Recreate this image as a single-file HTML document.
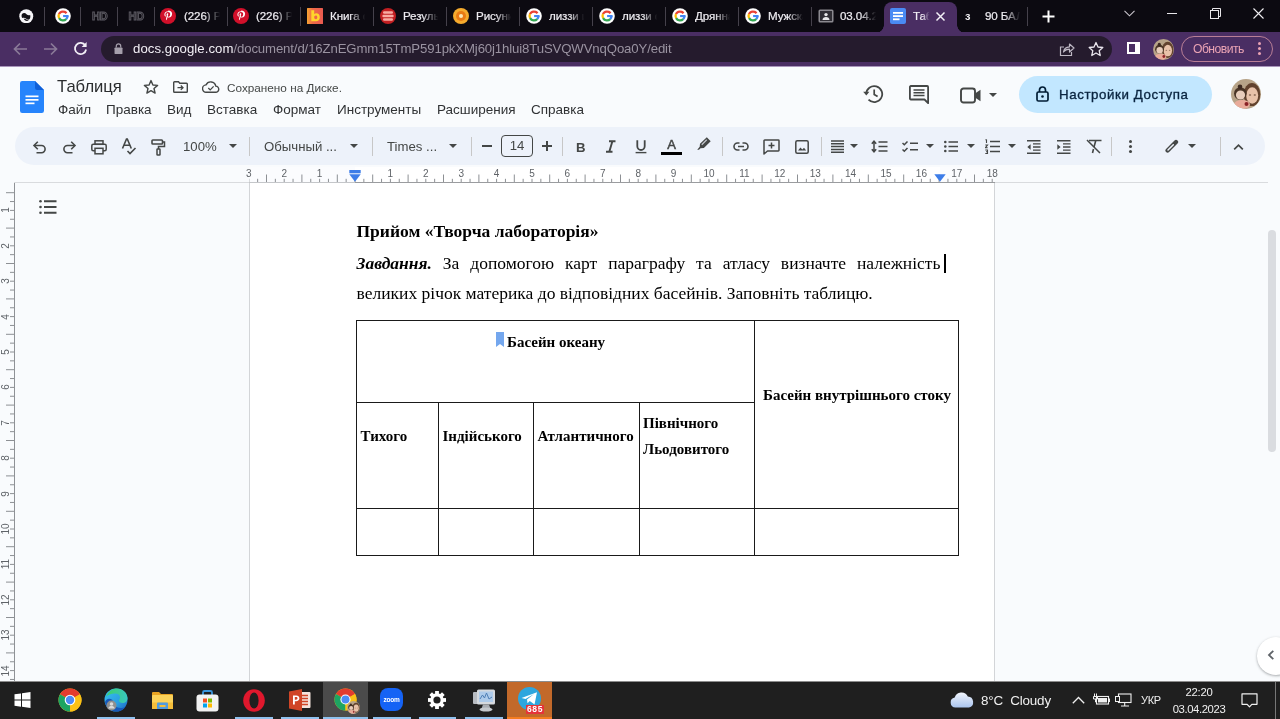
<!DOCTYPE html>
<html lang="ru">
<head>
<meta charset="utf-8">
<title>Таблиця</title>
<style>
*{box-sizing:border-box;margin:0;padding:0}
html,body{width:1280px;height:719px;overflow:hidden;background:#f9fbfd;font-family:"Liberation Sans",sans-serif;}
.abs{position:absolute}
#root{opacity:0.999;position:relative;width:1280px;height:719px;overflow:hidden;background:#f9fbfd}
/* ---------- chrome tab strip ---------- */
#tabs{position:absolute;left:0;top:0;width:1280px;height:33px;background:#0c0a11}
.tsep{position:absolute;top:7px;width:1px;height:19px;background:#45414b}
.tab-t{position:absolute;top:7.8px;font-size:11.6px;color:#efedf2;-webkit-text-stroke:0.2px #efedf2;white-space:nowrap;overflow:hidden;height:16px;line-height:15px;letter-spacing:-0.1px;-webkit-mask-image:linear-gradient(90deg,#000 55%,transparent 98%);mask-image:linear-gradient(90deg,#000 55%,transparent 98%)}
.fav{position:absolute;top:8px;width:16px;height:16px}
#atab{position:absolute;left:884px;top:2px;width:73px;height:31px;background:#4a2e63;border-radius:8px 8px 0 0}
/* ---------- address bar ---------- */
#addr{position:absolute;left:0;top:32px;width:1280px;height:34px;background:#4a2e63}
#pill{position:absolute;left:101px;top:3.5px;width:1011px;height:26.5px;border-radius:13.5px;background:#251b2d}
#url{position:absolute;left:133px;top:8px;font-size:13.2px;line-height:17px;color:#9a93a1;white-space:nowrap;letter-spacing:-0.13px}
#url b{font-weight:normal;color:#f3f0f6;letter-spacing:0.05px}
#upd{position:absolute;left:1181px;top:4px;width:92px;height:26px;border-radius:13px;border:1px solid #b97f96;color:#eaa3b4;font-size:12.2px;line-height:24px;padding-left:11px;letter-spacing:-0.55px}
/* ---------- docs header ---------- */
#hdr{position:absolute;left:0;top:66px;width:1280px;height:62px;background:#f9fbfd;border-top:1px solid #a995bb}
#title{position:absolute;left:57px;top:75.5px;font-size:16.6px;line-height:22px;color:#2b2d2f}
#saved{position:absolute;left:227px;top:81px;font-size:11.75px;line-height:14px;color:#444746}
.menu{position:absolute;top:102px;font-size:13.5px;line-height:16px;color:#303234}
#share{position:absolute;left:1019px;top:76px;width:193px;height:37px;border-radius:19px;background:#c2e7ff}
#share span{position:absolute;left:40px;top:10px;font-size:13.3px;line-height:17px;color:#0a2540;font-weight:normal;letter-spacing:0.58px;-webkit-text-stroke:0.35px #0a2540}
/* ---------- toolbar ---------- */
#tb{position:absolute;left:15px;top:127px;width:1250px;height:38px;border-radius:19px;background:#edf2fa}
.tbs{position:absolute;top:137px;width:1px;height:19px;background:#c7c7c7}
.tbt{position:absolute;top:138px;font-size:13.2px;line-height:17px;color:#444746;white-space:nowrap}
.ic{position:absolute}
.dd{position:absolute;top:144px;width:0;height:0;border-left:4px solid transparent;border-right:4px solid transparent;border-top:4px solid #444746}
.rn{top:168px;width:20px;text-align:center;font-size:10px;line-height:12px;color:#5f6368}
.vn{left:-4px;width:20px;height:20px;text-align:center;font-size:10px;line-height:20px;color:#5f6368;transform:rotate(-90deg)}
.dt{font-family:"Liberation Serif",serif;font-size:17.5px;line-height:30px;color:#000;white-space:nowrap}
.tt{font-family:"Liberation Serif",serif;font-size:15px;line-height:26px;font-weight:bold;color:#000;white-space:nowrap}
</style>
</head>
<body>
<div id="root">
<svg width="0" height="0" style="position:absolute"><defs>
<filter id="avb" x="-10%" y="-10%" width="120%" height="120%"><feGaussianBlur stdDeviation="0.7"/></filter>
<clipPath id="avc"><circle cx="15" cy="15" r="15"/></clipPath>
<symbol id="av" viewBox="0 0 30 30"><g clip-path="url(#avc)"><rect width="30" height="30" fill="#b7a388"/><g filter="url(#avb)">
<ellipse cx="21" cy="15.500" rx="8.300" ry="11.500" fill="#62432d"/>
<ellipse cx="21.200" cy="16.500" rx="6" ry="8.300" fill="#e8c2a9"/>
<circle cx="9.300" cy="14.500" r="6.300" fill="#4a3426"/>
<circle cx="9" cy="7.800" r="2.300" fill="#3e2b20"/>
<circle cx="9.500" cy="16" r="4.600" fill="#e8cdbb"/>
<ellipse cx="11" cy="25.500" rx="8" ry="4.500" fill="#e9ab9a"/>
<circle cx="15.500" cy="25" r="2" fill="#8a2327"/>
<ellipse cx="19" cy="16" rx="1.200" ry="0.700" fill="#7a5a48"/><ellipse cx="23.800" cy="16" rx="1.200" ry="0.700" fill="#7a5a48"/>
</g></g></symbol></defs></svg>

<!-- TAB STRIP -->
<div id="tabs">
  <div id="atab"></div>
  <div class="abs" style="left:876px;top:25px;width:8px;height:8px;background:radial-gradient(circle at 0 0,transparent 7.500px,#4a2e63 8px)"></div><div class="abs" style="left:957px;top:25px;width:8px;height:8px;background:radial-gradient(circle at 100% 0,transparent 7.500px,#4a2e63 8px)"></div>
  <div class="tsep" style="left:44px"></div>
  <div class="tsep" style="left:80px"></div>
  <div class="tsep" style="left:117px"></div>
  <div class="tsep" style="left:154px"></div>
  <div class="tsep" style="left:227px"></div>
  <div class="tsep" style="left:300px"></div>
  <div class="tsep" style="left:373px"></div>
  <div class="tsep" style="left:446px"></div>
  <div class="tsep" style="left:519px"></div>
  <div class="tsep" style="left:592px"></div>
  <div class="tsep" style="left:665px"></div>
  <div class="tsep" style="left:738px"></div>
  <div class="tsep" style="left:811px"></div>
  <div class="tsep" style="left:1027px"></div>
  <svg class="abs" style="left:19px;top:8.500px" width="14.500" height="14.500" viewBox="0 0 16 16"><circle cx="8" cy="8" r="7.700" fill="#f6f5f8"/><path d="M3.300 5.600c1.700-1.700 3.600-1.300 5 .1 1.200 1.200 2.700 1.300 4 .8.500 1.800.2 3.500-.8 4.900-1.500.7-2.900.2-3.900-.8-1.200-1.200-2.700-1.400-4.100-.6C2.700 8.500 2.600 7 3.300 5.600z" fill="#121016"/><path d="M5.200 10.800c1-.4 1.900-.1 2.600.6.900.9 2 1.300 3.100 1.100-1.600 1.300-4.200 1.100-5.700-1.700z" fill="#121016"/></svg>
  <svg class="fav" style="left:55px" viewBox="0 0 16 16"><circle cx="8" cy="8" r="7.800" fill="#fff"/><path d="M2.92 5.63 A5.60 5.60 0 0 1 12.41 4.55 L10.60 5.97 A3.30 3.30 0 0 0 5.01 6.61 Z" fill="#ea4335"/><path d="M3.15 10.80 A5.60 5.60 0 0 1 2.97 5.55 L5.03 6.55 A3.30 3.30 0 0 0 5.14 9.65 Z" fill="#fbbc05"/><path d="M12.16 11.75 A5.60 5.60 0 0 1 3.10 10.71 L5.11 9.60 A3.30 3.30 0 0 0 10.45 10.21 Z" fill="#34a853"/><path d="M13.60 7.80 A5.60 5.60 0 0 1 12.10 11.82 L10.41 10.25 A3.30 3.30 0 0 0 11.30 7.88 Z" fill="#4285f4"/><rect x="8.100" y="7" width="5.400" height="2.100" fill="#4285f4"/></svg>
  <div class="abs" style="left:92px;top:9px;font-size:11px;font-weight:bold;color:#1b1920;line-height:15px;letter-spacing:-0.3px;-webkit-text-stroke:0.9px #5d5b63">HD</div>
  <div class="abs" style="left:128.500px;top:9px;font-size:11px;font-weight:bold;color:#1b1920;line-height:15px;letter-spacing:-0.3px;-webkit-text-stroke:0.9px #5d5b63">HD</div>
  <svg class="fav" style="left:160px" viewBox="0 0 16 16"><circle cx="8" cy="8" r="8" fill="#d1102a"/><path d="M8.2 3.300c-2.500 0-3.800 1.700-3.800 3.300 0 .9.400 1.700 1.100 2 .1.100.2 0 .3-.1l.1-.5c0-.1 0-.2-.1-.3-.2-.3-.4-.7-.4-1.200 0-1.400 1.100-2.400 2.600-2.400 1.400 0 2.200.9 2.200 2 0 1.500-.7 2.700-1.600 2.700-.5 0-.9-.4-.8-1 .2-.6.5-1.300.5-1.800 0-.4-.2-.8-.7-.8-.6 0-1 .6-1 1.400 0 .5.200.8.200.8l-.7 2.800c-.2.800 0 1.900 0 2 0 .1.100.1.100 0 .1-.1.800-1 1-1.800l.4-1.500c.2.400.8.700 1.400.700 1.800 0 3.100-1.700 3.100-3.900 0-1.700-1.400-3.200-3.900-3.200z" fill="#fff"/></svg>
  <div class="tab-t" style="left:184px;width:37px">(226) P</div>
  <svg class="fav" style="left:233px" viewBox="0 0 16 16"><circle cx="8" cy="8" r="8" fill="#d1102a"/><path d="M8.2 3.300c-2.500 0-3.800 1.700-3.800 3.300 0 .9.400 1.700 1.100 2 .1.100.2 0 .3-.1l.1-.5c0-.1 0-.2-.1-.3-.2-.3-.4-.7-.4-1.200 0-1.400 1.100-2.400 2.600-2.400 1.400 0 2.200.9 2.200 2 0 1.500-.7 2.700-1.600 2.700-.5 0-.9-.4-.8-1 .2-.6.5-1.300.5-1.800 0-.4-.2-.8-.7-.8-.6 0-1 .6-1 1.400 0 .5.200.8.200.8l-.7 2.800c-.2.800 0 1.900 0 2 0 .1.100.1.100 0 .1-.1.800-1 1-1.800l.4-1.500c.2.400.8.700 1.400.700 1.800 0 3.100-1.700 3.100-3.900 0-1.700-1.400-3.200-3.900-3.200z" fill="#fff"/></svg>
  <div class="tab-t" style="left:256px;width:37px">(226) P</div>
  <svg class="fav" style="left:307px" viewBox="0 0 16 16"><defs><linearGradient id="bg1" x1="0" y1="0" x2="1" y2="0"><stop offset="0" stop-color="#f7a531"/><stop offset="0.350" stop-color="#ee6a48"/><stop offset="1" stop-color="#ea5a50"/></linearGradient></defs><rect width="16" height="16" rx="0.500" fill="url(#bg1)"/><path d="M4.300 2.300h2.900v3.600c.6-.4 1.300-.6 2.100-.6 2.100 0 3.500 1.500 3.500 3.900s-1.500 4.100-3.800 4.100H4.300zM7.200 9.300c0 1.200.7 1.900 1.600 1.900s1.500-.7 1.500-1.900-.6-1.800-1.500-1.800-1.600.7-1.600 1.800z" fill="#ffd52b"/></svg>
  <div class="tab-t" style="left:330px;width:36px">Книга о</div>
  <svg class="fav" style="left:380px" viewBox="0 0 16 16"><circle cx="8" cy="8" r="8" fill="#c21f22"/><rect x="3" y="3.200" width="10" height="2.600" rx="1.200" fill="#f8aaa2"/><rect x="2.300" y="6.700" width="11.400" height="2.600" rx="1.200" fill="#f8aaa2"/><rect x="3" y="10.200" width="10" height="2.600" rx="1.200" fill="#f8aaa2"/></svg>
  <div class="tab-t" style="left:403px;width:36px">Результ</div>
  <svg class="fav" style="left:453px" viewBox="0 0 16 16"><circle cx="8" cy="8" r="8" fill="#f6ab2d"/><circle cx="8" cy="8" r="5" fill="#ea7a14"/><circle cx="8" cy="8" r="2" fill="#ffe9b3"/></svg>
  <div class="tab-t" style="left:476px;width:36px">Рисунки</div>
  <svg class="fav" style="left:526px" viewBox="0 0 16 16"><circle cx="8" cy="8" r="7.800" fill="#fff"/><path d="M2.92 5.63 A5.60 5.60 0 0 1 12.41 4.55 L10.60 5.97 A3.30 3.30 0 0 0 5.01 6.61 Z" fill="#ea4335"/><path d="M3.15 10.80 A5.60 5.60 0 0 1 2.97 5.55 L5.03 6.55 A3.30 3.30 0 0 0 5.14 9.65 Z" fill="#fbbc05"/><path d="M12.16 11.75 A5.60 5.60 0 0 1 3.10 10.71 L5.11 9.60 A3.30 3.30 0 0 0 10.45 10.21 Z" fill="#34a853"/><path d="M13.60 7.80 A5.60 5.60 0 0 1 12.10 11.82 L10.41 10.25 A3.30 3.30 0 0 0 11.30 7.88 Z" fill="#4285f4"/><rect x="8.100" y="7" width="5.400" height="2.100" fill="#4285f4"/></svg>
  <div class="tab-t" style="left:549px;width:36px">лиззи и</div>
  <svg class="fav" style="left:599px" viewBox="0 0 16 16"><circle cx="8" cy="8" r="7.800" fill="#fff"/><path d="M2.92 5.63 A5.60 5.60 0 0 1 12.41 4.55 L10.60 5.97 A3.30 3.30 0 0 0 5.01 6.61 Z" fill="#ea4335"/><path d="M3.15 10.80 A5.60 5.60 0 0 1 2.97 5.55 L5.03 6.55 A3.30 3.30 0 0 0 5.14 9.65 Z" fill="#fbbc05"/><path d="M12.16 11.75 A5.60 5.60 0 0 1 3.10 10.71 L5.11 9.60 A3.30 3.30 0 0 0 10.45 10.21 Z" fill="#34a853"/><path d="M13.60 7.80 A5.60 5.60 0 0 1 12.10 11.82 L10.41 10.25 A3.30 3.30 0 0 0 11.30 7.88 Z" fill="#4285f4"/><rect x="8.100" y="7" width="5.400" height="2.100" fill="#4285f4"/></svg>
  <div class="tab-t" style="left:622px;width:36px">лиззи о</div>
  <svg class="fav" style="left:672px" viewBox="0 0 16 16"><circle cx="8" cy="8" r="7.800" fill="#fff"/><path d="M2.92 5.63 A5.60 5.60 0 0 1 12.41 4.55 L10.60 5.97 A3.30 3.30 0 0 0 5.01 6.61 Z" fill="#ea4335"/><path d="M3.15 10.80 A5.60 5.60 0 0 1 2.97 5.55 L5.03 6.55 A3.30 3.30 0 0 0 5.14 9.65 Z" fill="#fbbc05"/><path d="M12.16 11.75 A5.60 5.60 0 0 1 3.10 10.71 L5.11 9.60 A3.30 3.30 0 0 0 10.45 10.21 Z" fill="#34a853"/><path d="M13.60 7.80 A5.60 5.60 0 0 1 12.10 11.82 L10.41 10.25 A3.30 3.30 0 0 0 11.30 7.88 Z" fill="#4285f4"/><rect x="8.100" y="7" width="5.400" height="2.100" fill="#4285f4"/></svg>
  <div class="tab-t" style="left:695px;width:36px">Дрянная</div>
  <svg class="fav" style="left:745px" viewBox="0 0 16 16"><circle cx="8" cy="8" r="7.800" fill="#fff"/><path d="M2.92 5.63 A5.60 5.60 0 0 1 12.41 4.55 L10.60 5.97 A3.30 3.30 0 0 0 5.01 6.61 Z" fill="#ea4335"/><path d="M3.15 10.80 A5.60 5.60 0 0 1 2.97 5.55 L5.03 6.55 A3.30 3.30 0 0 0 5.14 9.65 Z" fill="#fbbc05"/><path d="M12.16 11.75 A5.60 5.60 0 0 1 3.10 10.71 L5.11 9.60 A3.30 3.30 0 0 0 10.45 10.21 Z" fill="#34a853"/><path d="M13.60 7.80 A5.60 5.60 0 0 1 12.10 11.82 L10.41 10.25 A3.30 3.30 0 0 0 11.30 7.88 Z" fill="#4285f4"/><rect x="8.100" y="7" width="5.400" height="2.100" fill="#4285f4"/></svg>
  <div class="tab-t" style="left:768px;width:36px">Мужска</div>
  <svg class="fav" style="left:818px" viewBox="0 0 16 16"><rect x="0.500" y="1.500" width="15" height="13" rx="1.500" fill="#8b8990"/><rect x="2" y="3" width="12" height="10" fill="#2f2d34"/><circle cx="8" cy="6.600" r="1.700" fill="#e8e8ea"/><path d="M4.500 12c0-2 1.500-3 3.500-3s3.500 1 3.500 3z" fill="#e8e8ea"/></svg>
  <div class="tab-t" style="left:840px;width:37px">03.04.20</div>
  <svg class="fav" style="left:890px" viewBox="0 0 16 16"><rect width="16" height="16" rx="2" fill="#4a8af4"/><rect x="3" y="4" width="10" height="1.800" fill="#fff"/><rect x="3" y="7.200" width="10" height="1.800" fill="#fff"/><rect x="3" y="10.400" width="6.500" height="1.800" fill="#fff"/></svg>
  <div class="tab-t" style="left:913px;width:17px;color:#f2eef6">Таб</div>
  <svg class="abs" style="left:935px;top:11px" width="11" height="11" viewBox="0 0 11 11"><path d="M1.500 1.500l8 8M9.500 1.500l-8 8" stroke="#f4f1f7" stroke-width="1.500"/></svg>
  <div class="abs" style="left:965px;top:9px;font-size:11px;font-weight:bold;color:#f2f0f4;line-height:15px">з</div>
  <div class="tab-t" style="left:985px;width:36px">90 БАЛ</div>
  <svg class="abs" style="left:1042px;top:10px" width="13" height="13" viewBox="0 0 13 13"><path d="M6.500 0.500v12M0.500 6.500h12" stroke="#fff" stroke-width="2"/></svg>
  <svg class="abs" style="left:1124px;top:10px" width="11" height="7" viewBox="0 0 11 7"><path d="M0.500 0.800l5 5 5-5" fill="none" stroke="#c9c6cd" stroke-width="1.100"/></svg>
  <div class="abs" style="left:1167px;top:13px;width:10px;height:1px;background:#e8e6ea"></div>
  <svg class="abs" style="left:1210px;top:8px" width="11" height="11" viewBox="0 0 11 11"><rect x="0.500" y="2.500" width="8" height="8" fill="none" stroke="#e8e6ea" stroke-width="1"/><path d="M2.500 2.500v-2h8v8h-2" fill="none" stroke="#e8e6ea" stroke-width="1"/></svg>
  <svg class="abs" style="left:1253px;top:8px" width="11" height="11" viewBox="0 0 11 11"><path d="M0.500 0.500l10 10M10.500 0.500l-10 10" stroke="#f0eef2" stroke-width="1.100"/></svg>
</div>

<!-- ADDRESS BAR -->
<div id="addr">
  <div id="pill"></div>
  <div id="url"><b>docs.google.com</b>/document/d/16ZnEGmm15TmP591pkXMj60j1hlui8TuSVQWVnqQoa0Y/edit</div>
  <div id="upd">Обновить</div>
  <svg class="abs" style="left:13px;top:10px" width="15" height="14" viewBox="0 0 15 14"><path d="M14 7H2M7 1.500L1.500 7 7 12.500" fill="none" stroke="#8a7a98" stroke-width="1.700"/></svg>
  <svg class="abs" style="left:43px;top:10px" width="15" height="14" viewBox="0 0 15 14"><path d="M1 7h12M8 1.500L13.500 7 8 12.500" fill="none" stroke="#8a7a98" stroke-width="1.700"/></svg>
  <svg class="abs" style="left:73px;top:9px" width="15" height="15" viewBox="0 0 15 15"><path d="M12.300 4.500A5.600 5.600 0 1 0 13.100 8.500" fill="none" stroke="#f2eef6" stroke-width="1.800"/><path d="M13.600 1v5h-5z" fill="#f2eef6"/></svg>
  <svg class="abs" style="left:113.500px;top:10.500px" width="9" height="11.500" viewBox="0 0 10 13"><rect x="0.500" y="5" width="9" height="7.500" rx="1" fill="#a59fab"/><path d="M2.500 5V3.500a2.500 2.500 0 0 1 5 0V5" fill="none" stroke="#a59fab" stroke-width="1.400"/></svg>
  <svg class="abs" style="left:1059px;top:9px" width="16" height="16" viewBox="0 0 16 16"><path d="M5 6H1.500v8.500h11V11" fill="none" stroke="#bdb7c3" stroke-width="1.200"/><path d="M4.500 11c.500-3 2.500-5 6-5.200V3l4.500 4-4.500 4V8.200c-2.500 0-4.500.8-6 2.800z" fill="none" stroke="#bdb7c3" stroke-width="1.200" stroke-linejoin="round"/></svg>
  <svg class="abs" style="left:1088px;top:9px" width="16" height="16" viewBox="0 0 16 16"><path d="M8 1.500l2 4.500 4.800.5-3.600 3.200 1 4.800L8 12l-4.200 2.500 1-4.800L1.200 6.500 6 6z" fill="none" stroke="#e9e5ed" stroke-width="1.300" stroke-linejoin="round"/></svg>
  <svg class="abs" style="left:1127px;top:10px" width="13" height="12" viewBox="0 0 13 12"><rect x="1" y="1" width="11" height="10" fill="none" stroke="#fff" stroke-width="2"/><rect x="8" y="1" width="4" height="10" fill="#fff"/></svg>
  <svg class="abs" style="left:1153px;top:6.500px" width="21" height="21"><use href="#av"/></svg>
  <div class="abs" style="left:1257.5px;top:10px;width:3px;height:3px;border-radius:50%;background:#eaa3b4;box-shadow:0 5px 0 #eaa3b4,0 10px 0 #eaa3b4"></div>
</div>

<!-- DOCS HEADER -->
<div id="hdr"></div>
<div id="title">Таблиця</div>
<div id="saved">Сохранено на Диске.</div>
<div class="menu" style="left:58px">Файл</div>
<div class="menu" style="left:106px">Правка</div>
<div class="menu" style="left:167px">Вид</div>
<div class="menu" style="left:207px">Вставка</div>
<div class="menu" style="left:273px">Формат</div>
<div class="menu" style="left:337px">Инструменты</div>
<div class="menu" style="left:437px">Расширения</div>
<div class="menu" style="left:531px">Справка</div>
<div id="share"><span>Настройки Доступа</span></div>

<svg class="abs" style="left:20px;top:81px" width="24" height="32" viewBox="0 0 24 32"><path d="M2.200 0H15l9 9v20.800a2.200 2.200 0 0 1-2.200 2.200H2.200A2.200 2.200 0 0 1 0 29.800V2.200A2.200 2.200 0 0 1 2.200 0z" fill="#2684fc"/><path d="M15 0l9 9h-6.800A2.200 2.200 0 0 1 15 6.800z" fill="#0f5fd8"/><rect x="5.500" y="14.500" width="13" height="1.700" fill="#fff"/><rect x="5.500" y="18" width="13" height="1.700" fill="#fff"/><rect x="5.500" y="21.500" width="9" height="1.700" fill="#fff"/></svg>
<svg class="abs" style="left:143px;top:79px" width="16" height="16" viewBox="0 0 16 16"><path d="M8 1.600l1.900 4.400 4.700.4-3.600 3.100 1.100 4.600L8 11.700l-4.100 2.400 1.100-4.600L1.400 6.400l4.700-.4z" fill="none" stroke="#444746" stroke-width="1.400" stroke-linejoin="round"/></svg>
<svg class="abs" style="left:173px;top:81px" width="15" height="12" viewBox="0 0 15 12"><path d="M0.700 1.500a.8.800 0 0 1 .8-.8h4l1.300 1.500h6.700a.8.800 0 0 1 .8.800v7.500a.8.800 0 0 1-.8.800h-12a.8.800 0 0 1-.8-.8z" fill="none" stroke="#444746" stroke-width="1.400"/><path d="M4.500 6.700h5M7.800 4.500l2.200 2.200-2.200 2.200" fill="none" stroke="#444746" stroke-width="1.300"/></svg>
<svg class="abs" style="left:202px;top:81px" width="18" height="12" viewBox="0 0 18 12"><path d="M4.500 11.300a3.700 3.700 0 0 1-.5-7.400 5.200 5.200 0 0 1 9.800 1.200 3.100 3.100 0 0 1-.3 6.200z" fill="none" stroke="#444746" stroke-width="1.400"/><path d="M6.300 7l1.900 1.900 3.400-3.500" fill="none" stroke="#444746" stroke-width="1.300"/></svg>
<svg class="abs" style="left:863px;top:84px" width="21" height="20" viewBox="0 0 21 20"><path d="M3.200 10a8 8 0 1 1 2.300 5.700" fill="none" stroke="#444746" stroke-width="1.800"/><path d="M0.200 7.800h6.200l-3.100 3.600z" fill="#444746"/><path d="M11.200 5.500v5l3.400 2" fill="none" stroke="#444746" stroke-width="1.700"/></svg>
<svg class="abs" style="left:909px;top:85px" width="21" height="19" viewBox="0 0 21 19"><path d="M1.800 1h16.400a.9.900 0 0 1 .9.900v16.300L15.500 14.500H1.800a.9.900 0 0 1-.9-.9V1.900a.9.900 0 0 1 .9-.9z" fill="none" stroke="#444746" stroke-width="1.800" stroke-linejoin="round"/><path d="M4.500 5h11M4.500 7.800h11M4.500 10.600h11" stroke="#444746" stroke-width="1.500"/></svg>
<svg class="abs" style="left:960px;top:87px" width="22" height="17" viewBox="0 0 22 17"><rect x="1" y="1.500" width="14" height="14" rx="2.500" fill="none" stroke="#444746" stroke-width="1.900"/><path d="M15 6.500l5.500-3.800v11.600L15 10.500z" fill="#444746"/></svg>
<div class="dd" style="left:989px;top:93px"></div>
<svg class="abs" style="left:1036px;top:86px" width="13" height="16" viewBox="0 0 13 16"><rect x="1" y="6" width="11" height="9" rx="1.500" fill="none" stroke="#001d35" stroke-width="1.700"/><path d="M3.500 6V4a3 3 0 0 1 6 0v2" fill="none" stroke="#001d35" stroke-width="1.700"/><circle cx="6.500" cy="10.500" r="1.300" fill="#001d35"/></svg>
<svg class="abs" style="left:1231px;top:79px" width="30" height="30"><use href="#av"/></svg>

<!-- TOOLBAR -->
<div id="tb"></div>
<div class="tbs" style="left:249px"></div>
<div class="tbs" style="left:372px"></div>
<div class="tbs" style="left:471px"></div>
<div class="tbs" style="left:562px"></div>
<div class="tbs" style="left:722px"></div>
<div class="tbs" style="left:821px"></div>
<div class="tbs" style="left:1111px"></div>
<div class="tbs" style="left:1220px"></div>
<svg class="ic" style="left:32px;top:140px" width="15" height="14" viewBox="0 0 15 14"><path d="M3 5.500h6.500a3.600 3.600 0 0 1 0 7.200H4.500" fill="none" stroke="#444746" stroke-width="1.600"/><path d="M5.800 1.800L2 5.500l3.800 3.700" fill="none" stroke="#444746" stroke-width="1.600"/></svg>
<svg class="ic" style="left:62px;top:140px" width="15" height="14" viewBox="0 0 15 14"><path d="M12 5.500H5.500a3.600 3.600 0 0 0 0 7.200h5" fill="none" stroke="#444746" stroke-width="1.600"/><path d="M9.200 1.800L13 5.500 9.200 9.200" fill="none" stroke="#444746" stroke-width="1.600"/></svg>
<svg class="ic" style="left:91px;top:140px" width="16" height="15" viewBox="0 0 16 15"><rect x="4" y="0.800" width="8" height="3.500" fill="none" stroke="#444746" stroke-width="1.500"/><rect x="0.800" y="4.300" width="14.400" height="6.500" rx="1.500" fill="none" stroke="#444746" stroke-width="1.500"/><rect x="4" y="8.300" width="8" height="5.500" fill="#edf2fa" stroke="#444746" stroke-width="1.500"/></svg>
<svg class="ic" style="left:121px;top:138px" width="16" height="17" viewBox="0 0 16 17"><path d="M1.500 10.500L5.500 1h.8l4 9.500M3 7.300h5.700" fill="none" stroke="#444746" stroke-width="1.600"/><path d="M6.500 13l2.500 2.500 5.500-5.500" fill="none" stroke="#444746" stroke-width="1.600"/></svg>
<svg class="ic" style="left:151px;top:139px" width="15" height="17" viewBox="0 0 15 17"><rect x="1" y="1" width="10.500" height="4" rx="0.800" fill="none" stroke="#444746" stroke-width="1.600"/><path d="M11.500 3h2v4.500H7.500V10" fill="none" stroke="#444746" stroke-width="1.500"/><rect x="6" y="10" width="3" height="6" rx="0.600" fill="none" stroke="#444746" stroke-width="1.500"/></svg>
<div class="tbt" style="left:183px">100%</div>
<div class="dd" style="left:229px"></div>
<div class="tbt" style="left:264px">Обычный ...</div>
<div class="dd" style="left:350px"></div>
<div class="tbt" style="left:387px">Times ...</div>
<div class="dd" style="left:449px"></div>
<div class="abs" style="left:482px;top:145px;width:10px;height:2px;background:#444746"></div>
<div class="abs" style="left:501px;top:135px;width:32px;height:22px;border:1px solid #444746;border-radius:4px;font-size:13.2px;line-height:20px;text-align:center;color:#444746">14</div>
<div class="abs" style="left:542px;top:145px;width:10px;height:2px;background:#444746"></div><div class="abs" style="left:546px;top:141px;width:2px;height:10px;background:#444746"></div>
<div class="abs" style="left:576px;top:138.500px;font-size:13.200px;font-weight:bold;line-height:17px;color:#444746">B</div>
<svg class="ic" style="left:605px;top:140px" width="12" height="13" viewBox="0 0 12 13"><path d="M4 1.200h6.500M1 11.800h6.500M7.400 1.200L4.300 11.800" fill="none" stroke="#444746" stroke-width="1.900"/></svg>
<svg class="ic" style="left:635px;top:140px" width="12" height="14" viewBox="0 0 12 14"><path d="M2.300 0.300v6a3.700 3.700 0 0 0 7.400 0v-6" fill="none" stroke="#444746" stroke-width="1.800"/><path d="M0.600 12.600h10.800" stroke="#444746" stroke-width="1.400"/></svg>
<div class="abs" style="left:667.300px;top:136px;font-size:13px;line-height:17px;color:#444746;-webkit-text-stroke:0.500px #444746">A</div>
<div class="abs" style="left:661.300px;top:151.800px;width:20.800px;height:3.300px;background:#000"></div>
<svg class="ic" style="left:697px;top:137px" width="14" height="13" viewBox="0 0 14 13"><path d="M9.800 0.300l3.900 3.900-6.800 6.800-3.400.3-1.500 1.500H0.200l2.500-3 .3-3z" fill="#444746"/><path d="M4.300 7.300l5-5 .9.900-5 5z" fill="#edf2fa" opacity="0.750"/></svg>
<svg class="ic" style="left:733px;top:142px" width="16" height="9" viewBox="0 0 16 9"><path d="M6.500 1H4.500a3.500 3.500 0 0 0 0 7h2M9.500 1h2a3.500 3.500 0 0 1 0 7h-2M5 4.500h6" fill="none" stroke="#444746" stroke-width="1.600"/></svg>
<svg class="ic" style="left:763px;top:139px" width="17" height="16" viewBox="0 0 17 16"><path d="M1.700 1h13.600a.7.700 0 0 1 .7.700v9.600a.7.700 0 0 1-.7.700H4.500L1 15V1.700a.7.700 0 0 1 .7-.7z" fill="none" stroke="#444746" stroke-width="1.500" stroke-linejoin="round"/><path d="M8.500 3.500v6M5.500 6.500h6" stroke="#444746" stroke-width="1.500"/></svg>
<svg class="ic" style="left:795px;top:140px" width="14" height="14" viewBox="0 0 14 14"><rect x="0.800" y="0.800" width="12.400" height="12.400" rx="1.500" fill="none" stroke="#444746" stroke-width="1.500"/><path d="M3 10.500l2.500-3 1.800 2 1.700-1.800 2.200 2.800z" fill="#444746"/></svg>
<svg class="ic" style="left:831px;top:140px" width="13" height="13" viewBox="0 0 13 13"><path d="M0 1h13M0 3.800h13M0 6.600h13M0 9.400h13M0 12.200h13" stroke="#444746" stroke-width="1.500"/></svg>
<div class="dd" style="left:850px"></div>
<svg class="ic" style="left:871px;top:140px" width="17" height="13" viewBox="0 0 17 13"><path d="M3 1.500v10M0.800 3.700L3 1.200l2.200 2.500M0.800 9.300L3 11.800l2.200-2.500" fill="none" stroke="#444746" stroke-width="1.500"/><path d="M7.500 2h9M7.500 6.500h9M7.500 11h9" stroke="#444746" stroke-width="1.600"/></svg>
<svg class="ic" style="left:902px;top:140px" width="16" height="13" viewBox="0 0 16 13"><path d="M0.500 3l1.800 1.800L5.500 1.500M0.500 9.500l1.800 1.800 3.200-3.300" fill="none" stroke="#444746" stroke-width="1.500"/><path d="M8 3.200h8M8 9.800h8" stroke="#444746" stroke-width="1.600"/></svg>
<div class="dd" style="left:926px"></div>
<svg class="ic" style="left:944px;top:140px" width="14" height="13" viewBox="0 0 14 13"><circle cx="1.300" cy="2" r="1.300" fill="#444746"/><circle cx="1.300" cy="6.500" r="1.300" fill="#444746"/><circle cx="1.300" cy="11" r="1.300" fill="#444746"/><path d="M4.500 2h9.500M4.500 6.500h9.500M4.500 11h9.500" stroke="#444746" stroke-width="1.600"/></svg>
<div class="dd" style="left:967px"></div>
<svg class="ic" style="left:985px;top:139px" width="15" height="15" viewBox="0 0 15 15"><path d="M1.500 0.500v3.500M0.500 1l1-.5M0.300 6h2.200L0.300 8.800h2.400M0.300 11h2.200v3.500H0.300M1 12.700h1.500" fill="none" stroke="#444746" stroke-width="1.100"/><path d="M5 2.500h10M5 7.500h10M5 12.500h10" stroke="#444746" stroke-width="1.600"/></svg>
<div class="dd" style="left:1008px"></div>
<svg class="ic" style="left:1027px;top:140px" width="13.500" height="14" viewBox="0 0 13.500 14"><path d="M0 0.800h13.500M6 3.900h7.500M6 7h7.500M6 10.100h7.500M0 13.200h13.500" stroke="#444746" stroke-width="1.400"/><path d="M3.600 4.300v5.400L0.300 7z" fill="#444746"/></svg>
<svg class="ic" style="left:1057px;top:140px" width="13.500" height="14" viewBox="0 0 13.500 14"><path d="M0 0.800h13.500M6 3.900h7.500M6 7h7.500M6 10.100h7.500M0 13.200h13.500" stroke="#444746" stroke-width="1.400"/><path d="M0.300 4.300v5.400L3.600 7z" fill="#444746"/></svg>
<svg class="ic" style="left:1086px;top:139px" width="16" height="15" viewBox="0 0 16 15"><path d="M3 1.500h12.500M9.800 1.500L8 8M7.500 10l-1 4" fill="none" stroke="#444746" stroke-width="1.600"/><path d="M1 1l13 13" stroke="#444746" stroke-width="1.500"/></svg>
<div class="abs" style="left:1129px;top:140px;width:3px;height:3px;border-radius:50%;background:#444746;box-shadow:0 5px 0 #444746,0 10px 0 #444746"></div>
<svg class="ic" style="left:1165px;top:139px" width="14" height="14" viewBox="0 0 14 14"><path d="M2.600 11.400L11 3" stroke="#444746" stroke-width="4.300" stroke-linecap="round"/><path d="M3 11L8.300 5.700" stroke="#edf2fa" stroke-width="1.500" stroke-linecap="round"/></svg>
<div class="dd" style="left:1188px"></div>
<svg class="ic" style="left:1233px;top:142px" width="11" height="8" viewBox="0 0 11 8"><path d="M1.200 7.400l4.300-4.200 4.300 4.200" fill="none" stroke="#444746" stroke-width="1.700"/></svg>

<!--RULERS-->
<div class="abs" style="left:0;top:166px;width:1280px;height:17px;background:#f9fbfd"></div>
<div class="abs" style="left:249px;top:167px;width:746px;height:15px;background:#fbfcfe"></div>
<div class="abs" style="left:355px;top:167px;width:585px;height:15px;background:#ffffff"></div>
<div class="abs" style="left:14px;top:182px;width:1254px;height:1px;background:#d9dbde"></div>
<div class="abs" style="left:249px;top:182px;width:106px;height:1px;background:#c4c6c9"></div>
<div class="abs" style="left:355px;top:182px;width:640px;height:1px;background:#9a9c9f"></div>
<svg class="abs" style="left:249px;top:166px" width="748" height="17" viewBox="0 0 748 17"><path d="M-0.20 12.8V16M8.65 12.8V16M17.50 8.5V16M26.35 12.8V16M35.20 12.8V16M44.05 12.8V16M52.90 8.5V16M61.75 12.8V16M70.60 12.8V16M79.45 12.8V16M88.30 8.5V16M97.15 12.8V16M106.00 12.8V16M114.85 12.8V16M123.70 8.5V16M132.55 12.8V16M141.40 12.8V16M150.25 12.8V16M159.10 8.5V16M167.95 12.8V16M176.80 12.8V16M185.65 12.8V16M194.50 8.5V16M203.35 12.8V16M212.20 12.8V16M221.05 12.8V16M229.90 8.5V16M238.75 12.8V16M247.60 12.8V16M256.45 12.8V16M265.30 8.5V16M274.15 12.8V16M283.00 12.8V16M291.85 12.8V16M300.70 8.5V16M309.55 12.8V16M318.40 12.8V16M327.25 12.8V16M336.10 8.5V16M344.95 12.8V16M353.80 12.8V16M362.65 12.8V16M371.50 8.5V16M380.35 12.8V16M389.20 12.8V16M398.05 12.8V16M406.90 8.5V16M415.75 12.8V16M424.60 12.8V16M433.45 12.8V16M442.30 8.5V16M451.15 12.8V16M460.00 12.8V16M468.85 12.8V16M477.70 8.5V16M486.55 12.8V16M495.40 12.8V16M504.25 12.8V16M513.10 8.5V16M521.95 12.8V16M530.80 12.8V16M539.65 12.8V16M548.50 8.5V16M557.35 12.8V16M566.20 12.8V16M575.05 12.8V16M583.90 8.5V16M592.75 12.8V16M601.60 12.8V16M610.45 12.8V16M619.30 8.5V16M628.15 12.8V16M637.00 12.8V16M645.85 12.8V16M654.70 8.5V16M663.55 12.8V16M672.40 12.8V16M681.25 12.8V16M690.10 8.5V16M698.95 12.8V16M707.80 12.8V16M716.65 12.8V16M725.50 8.5V16M734.35 12.8V16M743.20 12.8V16" stroke="#8d9094" stroke-width="1" fill="none"/></svg>
<div class="abs rn" style="left:238.8px">3</div>
<div class="abs rn" style="left:274.2px">2</div>
<div class="abs rn" style="left:309.6px">1</div>
<div class="abs rn" style="left:380.4px">1</div>
<div class="abs rn" style="left:415.8px">2</div>
<div class="abs rn" style="left:451.2px">3</div>
<div class="abs rn" style="left:486.6px">4</div>
<div class="abs rn" style="left:522.0px">5</div>
<div class="abs rn" style="left:557.4px">6</div>
<div class="abs rn" style="left:592.8px">7</div>
<div class="abs rn" style="left:628.2px">8</div>
<div class="abs rn" style="left:663.6px">9</div>
<div class="abs rn" style="left:699.0px">10</div>
<div class="abs rn" style="left:734.4px">11</div>
<div class="abs rn" style="left:769.8px">12</div>
<div class="abs rn" style="left:805.2px">13</div>
<div class="abs rn" style="left:840.6px">14</div>
<div class="abs rn" style="left:876.0px">15</div>
<div class="abs rn" style="left:911.4px">16</div>
<div class="abs rn" style="left:946.8px">17</div>
<div class="abs rn" style="left:982.2px">18</div>
<svg class="abs" style="left:349px;top:170px" width="12" height="12" viewBox="0 0 12 12"><rect x="0.300" y="0" width="11.400" height="3.300" fill="#3d7de8"/><path d="M0.300 4.200h11.400L6 11.800z" fill="#3d7de8"/></svg>
<svg class="abs" style="left:934px;top:174px" width="12" height="8" viewBox="0 0 12 8"><path d="M0.300 0.200h11.400L6 7.800z" fill="#3d7de8"/></svg>
<div class="abs" style="left:0;top:183px;width:14px;height:499px;background:#f9fbfd"></div>
<div class="abs" style="left:14px;top:183px;width:1px;height:499px;background:#8f9296"></div>
<svg class="abs" style="left:0;top:183px" width="15" height="499" viewBox="0 0 15 499"><path d="M6.0 9.70H14M10.0 18.55H14M10.0 27.40H14M10.0 36.25H14M6.0 45.10H14M10.0 53.95H14M10.0 62.80H14M10.0 71.65H14M6.0 80.50H14M10.0 89.35H14M10.0 98.20H14M10.0 107.05H14M6.0 115.90H14M10.0 124.75H14M10.0 133.60H14M10.0 142.45H14M6.0 151.30H14M10.0 160.15H14M10.0 169.00H14M10.0 177.85H14M6.0 186.70H14M10.0 195.55H14M10.0 204.40H14M10.0 213.25H14M6.0 222.10H14M10.0 230.95H14M10.0 239.80H14M10.0 248.65H14M6.0 257.50H14M10.0 266.35H14M10.0 275.20H14M10.0 284.05H14M6.0 292.90H14M10.0 301.75H14M10.0 310.60H14M10.0 319.45H14M6.0 328.30H14M10.0 337.15H14M10.0 346.00H14M10.0 354.85H14M6.0 363.70H14M10.0 372.55H14M10.0 381.40H14M10.0 390.25H14M6.0 399.10H14M10.0 407.95H14M10.0 416.80H14M10.0 425.65H14M6.0 434.50H14M10.0 443.35H14M10.0 452.20H14M10.0 461.05H14M6.0 469.90H14M10.0 478.75H14M10.0 487.60H14M10.0 496.45H14" stroke="#8d9094" stroke-width="1" fill="none"/></svg>
<div class="abs vn" style="top:200.4px">1</div>
<div class="abs vn" style="top:235.8px">2</div>
<div class="abs vn" style="top:271.2px">3</div>
<div class="abs vn" style="top:306.6px">4</div>
<div class="abs vn" style="top:342.0px">5</div>
<div class="abs vn" style="top:377.4px">6</div>
<div class="abs vn" style="top:412.8px">7</div>
<div class="abs vn" style="top:448.2px">8</div>
<div class="abs vn" style="top:483.6px">9</div>
<div class="abs vn" style="top:519.0px">10</div>
<div class="abs vn" style="top:554.4px">11</div>
<div class="abs vn" style="top:589.8px">12</div>
<div class="abs vn" style="top:625.2px">13</div>
<div class="abs vn" style="top:660.6px">14</div>
<!--PAGE-->
<div class="abs" style="left:249px;top:183px;width:746px;height:499px;background:#fff;border-left:1px solid #d3d5d8;border-right:1px solid #d3d5d8"></div>
<svg class="abs" style="left:39px;top:199px" width="18" height="16" viewBox="0 0 18 16"><circle cx="1.500" cy="2.300" r="1.300" fill="#444746"/><circle cx="1.500" cy="8" r="1.300" fill="#444746"/><circle cx="1.500" cy="13.700" r="1.300" fill="#444746"/><path d="M5 2.300h12.500M5 8h12.500M5 13.700h12.500" stroke="#444746" stroke-width="1.900"/></svg>
<div class="abs dt" style="left:356.500px;top:215.600px;font-weight:bold">Прийом «Творча лабораторія»</div>
<div class="abs dt" style="left:356.500px;top:248.100px;width:584px;text-align:justify;text-align-last:justify"><b><i>Завдання.</i></b> За допомогою карт параграфу та атласу визначте належність</div>
<div class="abs dt" style="left:356.500px;top:278.100px">великих річок материка до відповідних басейнів. Заповніть таблицю.</div>
<div class="abs" style="left:944px;top:254px;width:2px;height:19px;background:#000"></div>
<div class="abs" style="left:356.0px;top:320.0px;width:603.0px;height:1px;background:#1a1a1a"></div>
<div class="abs" style="left:356.0px;top:555.0px;width:603.0px;height:1px;background:#1a1a1a"></div>
<div class="abs" style="left:356.0px;top:508.0px;width:603.0px;height:1px;background:#1a1a1a"></div>
<div class="abs" style="left:356.0px;top:402.0px;width:398.5px;height:1px;background:#1a1a1a"></div>
<div class="abs" style="left:356.0px;top:320.0px;width:1px;height:236.0px;background:#1a1a1a"></div>
<div class="abs" style="left:958.0px;top:320.0px;width:1px;height:236.0px;background:#1a1a1a"></div>
<div class="abs" style="left:754.0px;top:320.0px;width:1px;height:236.0px;background:#1a1a1a"></div>
<div class="abs" style="left:438.0px;top:402.0px;width:1px;height:154.0px;background:#1a1a1a"></div>
<div class="abs" style="left:533.0px;top:402.0px;width:1px;height:154.0px;background:#1a1a1a"></div>
<div class="abs" style="left:639.0px;top:402.0px;width:1px;height:154.0px;background:#1a1a1a"></div>
<svg class="abs" style="left:496px;top:332px" width="8" height="15" viewBox="0 0 8 15"><path d="M0 0h8v15l-4-3-4 3z" fill="#74a7ee"/></svg>
<div class="abs tt" style="left:507px;top:328.500px">Басейн океану</div>
<div class="abs tt" style="left:763px;top:382px">Басейн внутрішнього стоку</div>
<div class="abs tt" style="left:360.500px;top:422.900px">Тихого</div>
<div class="abs tt" style="left:442.500px;top:422.900px">Індійського</div>
<div class="abs tt" style="left:537.500px;top:422.900px">Атлантичного</div>
<div class="abs tt" style="left:643px;top:409.900px">Північного</div>
<div class="abs tt" style="left:643px;top:436.200px">Льодовитого</div>
<div class="abs" style="left:1268px;top:230px;width:8px;height:222px;border-radius:4px;background:#dadce0"></div>
<div class="abs" style="left:1257px;top:637px;width:38px;height:37.500px;border-radius:50%;background:#fff;box-shadow:0 1px 3px rgba(60,64,67,.28),0 1px 2px rgba(60,64,67,.18)"></div>
<svg class="abs" style="left:1266.500px;top:650px" width="8" height="10" viewBox="0 0 8 10"><path d="M6.300 0.800L2 5 6.300 9.200" fill="none" stroke="#5f6368" stroke-width="1.800"/></svg>
<!--TASKBAR-->
<div class="abs" style="left:0;top:681px;width:1280px;height:38px;background:#1f1f1f;border-top:1px solid #8c8c8c"></div>
<div class="abs" style="left:323px;top:682px;width:45px;height:37px;background:#4b4b4b"></div>
<div class="abs" style="left:507px;top:682px;width:45px;height:37px;background:#c2692a"></div>
<div class="abs" style="left:97.0px;top:717px;width:38.0px;height:2px;background:#8fc1ee"></div>
<div class="abs" style="left:235.0px;top:717px;width:37.5px;height:2px;background:#8fc1ee"></div>
<div class="abs" style="left:281.0px;top:717px;width:37.5px;height:2px;background:#8fc1ee"></div>
<div class="abs" style="left:323.0px;top:717px;width:45.0px;height:2px;background:#8fc1ee"></div>
<div class="abs" style="left:373.0px;top:717px;width:37.5px;height:2px;background:#8fc1ee"></div>
<div class="abs" style="left:419.0px;top:717px;width:37.0px;height:2px;background:#8fc1ee"></div>
<div class="abs" style="left:465.0px;top:717px;width:37.5px;height:2px;background:#8fc1ee"></div>
<div class="abs" style="left:507px;top:717px;width:45px;height:2px;background:#f57c1f"></div>
<svg class="abs" style="left:14px;top:692px" width="17" height="16" viewBox="0 0 17 16"><path d="M0.500 2.300l6.500-.9v6.200H0.500zM8 1.300L16.500 0v7.600H8zM0.500 8.500H7v6.200l-6.500-.9zM8 8.500h8.500V16L8 14.800z" fill="#fff"/></svg>
<svg class="abs" style="left:58.4px;top:688.3px" width="24" height="24" viewBox="-12 -12 24 24"><circle r="11.500" fill="#fbc116"/><path d="M0 0L-9.96 -5.75 A11.500 11.500 0 0 1 9.96 -5.75 Z" fill="#e33b2e"/><path d="M0 0L0.00 11.50 A11.500 11.500 0 0 1 -9.96 -5.75 Z" fill="#1da462"/><path d="M0 0L9.96 -5.75 A11.500 11.500 0 0 1 0.00 11.50 Z" fill="#fbc116"/><circle r="5.300" fill="#fff"/><circle r="4.200" fill="#4c8bf5"/></svg>
<svg class="abs" style="left:104px;top:688px" width="24" height="24" viewBox="0 0 24 24"><defs><linearGradient id="eg1" x1="0" y1="0" x2="1" y2="1"><stop offset="0" stop-color="#35c1f1"/><stop offset="0.600" stop-color="#2b9fe0"/><stop offset="1" stop-color="#1a60c0"/></linearGradient><linearGradient id="eg2" x1="0" y1="0" x2="1" y2="0"><stop offset="0" stop-color="#3ccf6a"/><stop offset="1" stop-color="#38c7c0"/></linearGradient></defs><circle cx="12" cy="12" r="11.500" fill="url(#eg1)"/><path d="M2 9C4 3 9 0.500 13 0.500 19 0.500 23.500 5 23.500 10c0 3-2 5-5 5-2 0-3.500-1-3.500-2.500 0-1 1-1.500 1-3C16 7 14 5.500 11 5.500 7 5.500 3.500 7 2 9z" fill="url(#eg2)"/><path d="M8.500 12c0 4 3 8 8 8 2 0 3.500-.5 5-1.500-2 3.500-5.500 5-9 5C6 23.500 1.500 19 1 14c1-3 4-4.500 7.500-2z" fill="#1758b8"/><circle cx="7.500" cy="17.500" r="5" fill="#8f8f8f"/><circle cx="7.500" cy="16" r="1.800" fill="#d9d9d9"/><path d="M4.200 20.500c.5-2 2-2.500 3.300-2.500s2.800.5 3.300 2.500z" fill="#d9d9d9"/></svg>
<svg class="abs" style="left:152px;top:691px" width="21" height="18" viewBox="0 0 21 18"><path d="M0 2a1 1 0 0 1 1-1h6l2 2h11a1 1 0 0 1 1 1v3H0z" fill="#e8a323"/><rect x="0" y="4" width="21" height="14" rx="1" fill="#fbd25a"/><rect x="0" y="11.500" width="21" height="6.500" fill="#f4bd3a"/><path d="M5 18v-5.500a1 1 0 0 1 1-1h9a1 1 0 0 1 1 1V18z" fill="#4f9be0"/><rect x="7.500" y="14" width="6" height="2" fill="#f4bd3a"/></svg>
<svg class="abs" style="left:196px;top:689px" width="23" height="23" viewBox="0 0 23 23"><path d="M7 6V3.500A1.500 1.500 0 0 1 8.500 2h6A1.500 1.500 0 0 1 16 3.500V6" fill="none" stroke="#3a96dd" stroke-width="1.800"/><rect x="0.500" y="5.500" width="22" height="17" rx="3" fill="#f2f2f2"/><rect x="7" y="9.500" width="4" height="4" fill="#f25022"/><rect x="12" y="9.500" width="4" height="4" fill="#7fba00"/><rect x="7" y="14.500" width="4" height="4" fill="#00a4ef"/><rect x="12" y="14.500" width="4" height="4" fill="#ffb900"/></svg>
<svg class="abs" style="left:243px;top:689px" width="22" height="23" viewBox="0 0 22 23"><ellipse cx="11" cy="11.500" rx="10.800" ry="11.300" fill="#e0182d"/><ellipse cx="11" cy="11.500" rx="4.600" ry="8" fill="#1f1f1f"/></svg>
<svg class="abs" style="left:289px;top:689px" width="22" height="22" viewBox="0 0 22 22"><rect x="8" y="3" width="13.500" height="16" rx="1" fill="#f4e3dc"/><path d="M11 6.500h8M11 9.500h8M11 12.500h8M11 15.500h8" stroke="#d04526" stroke-width="1.300"/><path d="M0 2.500L13 0v22L0 19.500z" fill="#d04526"/><path d="M4 6.500h3.200c2 0 3.200 1.100 3.200 2.800s-1.300 2.900-3.300 2.900H5.800v3.300H4zM5.800 8v2.700h1.200c1 0 1.500-.5 1.500-1.400S8 8 7 8z" fill="#fff"/></svg>
<svg class="abs" style="left:334.0px;top:688.0px" width="23" height="23" viewBox="-12 -12 24 24"><circle r="11.500" fill="#fbc116"/><path d="M0 0L-9.96 -5.75 A11.500 11.500 0 0 1 9.96 -5.75 Z" fill="#e33b2e"/><path d="M0 0L0.00 11.50 A11.500 11.500 0 0 1 -9.96 -5.75 Z" fill="#1da462"/><path d="M0 0L9.96 -5.75 A11.500 11.500 0 0 1 0.00 11.50 Z" fill="#fbc116"/><circle r="5.300" fill="#fff"/><circle r="4.200" fill="#4c8bf5"/></svg>
<svg class="abs" style="left:347px;top:701px" width="13" height="13"><use href="#av"/></svg>
<div class="abs" style="left:380px;top:688px;width:23px;height:23px;border-radius:8px;background:#1563f5;color:#fff;font-size:6.500px;font-weight:bold;line-height:23px;text-align:center;letter-spacing:-0.2px">zoom</div>
<svg class="abs" style="left:428px;top:691px" width="18" height="18" viewBox="-9 -9 18 18"><rect x="-1.900" y="-9" width="3.800" height="5" transform="rotate(0)" fill="#fff"/><rect x="-1.900" y="-9" width="3.800" height="5" transform="rotate(45)" fill="#fff"/><rect x="-1.900" y="-9" width="3.800" height="5" transform="rotate(90)" fill="#fff"/><rect x="-1.900" y="-9" width="3.800" height="5" transform="rotate(135)" fill="#fff"/><rect x="-1.900" y="-9" width="3.800" height="5" transform="rotate(180)" fill="#fff"/><rect x="-1.900" y="-9" width="3.800" height="5" transform="rotate(225)" fill="#fff"/><rect x="-1.900" y="-9" width="3.800" height="5" transform="rotate(270)" fill="#fff"/><rect x="-1.900" y="-9" width="3.800" height="5" transform="rotate(315)" fill="#fff"/><circle r="5.200" fill="none" stroke="#fff" stroke-width="3.200"/></svg>
<svg class="abs" style="left:472px;top:689px" width="24" height="23" viewBox="0 0 24 23"><rect x="1" y="3" width="14" height="12" rx="1" fill="#b8bcc2"/><rect x="5" y="0.500" width="18" height="15" rx="1.500" fill="#d5d9de"/><rect x="7" y="2.500" width="14" height="10.500" fill="#aecbea"/><path d="M8 10l2.500-4 2 3 2-5 2.500 6 3-2" fill="none" stroke="#4f7fb5" stroke-width="1"/><path d="M11 15.500h6l1.500 4h-9z" fill="#a9adb3"/><ellipse cx="14" cy="20.500" rx="6.500" ry="2" fill="#c4c8cd"/></svg>
<div class="abs" style="left:518px;top:687px;width:23px;height:23px;border-radius:50%;background:#2ea6de"></div>
<svg class="abs" style="left:521px;top:692px" width="17" height="13" viewBox="0 0 17 13"><path d="M0.500 6L16 0.300 13.500 12.500 8.800 9 6.500 11.200 6 7.500 13 2 4.500 7z" fill="#fff"/></svg>
<div class="abs" style="left:526px;top:704.500px;width:18px;height:9px;background:#e5343a;color:#fff;font-size:8.500px;line-height:9px;text-align:center;letter-spacing:0.600px;font-weight:bold">685</div>
<svg class="abs" style="left:950px;top:692px" width="25" height="16" viewBox="0 0 25 16"><defs><linearGradient id="cl" x1="0" y1="0" x2="0" y2="1"><stop offset="0" stop-color="#f1f5fc"/><stop offset="1" stop-color="#aac4ee"/></linearGradient></defs><path d="M5.500 15.500a5 5 0 0 1-.8-9.900A7 7 0 0 1 17.800 4.500a5.600 5.600 0 0 1 1.200 11z" fill="url(#cl)"/></svg>
<div class="abs" style="left:981px;top:691.500px;font-size:13.400px;line-height:17px;color:#f0f0f0;white-space:pre;letter-spacing:-0.150px">8°C  Cloudy</div>
<svg class="abs" style="left:1072px;top:696px" width="13" height="8" viewBox="0 0 13 8"><path d="M0.800 7.200l5.700-5.700 5.700 5.700" fill="none" stroke="#f0f0f0" stroke-width="1.300"/></svg>
<svg class="abs" style="left:1093px;top:693px" width="17" height="13" viewBox="0 0 17 13"><rect x="3.500" y="3.500" width="12" height="7.500" fill="none" stroke="#f0f0f0" stroke-width="1.100"/><rect x="5" y="5" width="9" height="4.500" fill="#f0f0f0"/><rect x="15.500" y="5.500" width="1.500" height="3.500" fill="#f0f0f0"/><path d="M1.500 0.500v3M3.500 0.500v3M0.500 3.500h4v2.500h-4zM2.500 6v3h1" fill="none" stroke="#f0f0f0" stroke-width="1"/></svg>
<svg class="abs" style="left:1115px;top:693px" width="17" height="14" viewBox="0 0 17 14"><rect x="3.500" y="1" width="12.500" height="8.500" fill="none" stroke="#f0f0f0" stroke-width="1.100"/><path d="M9.700 9.500v3M6 13h8" stroke="#f0f0f0" stroke-width="1.100"/><rect x="0.500" y="3.500" width="4" height="5" fill="#1f1f1f" stroke="#f0f0f0" stroke-width="1"/></svg>
<div class="abs" style="left:1141px;top:692.500px;font-size:11px;line-height:14px;color:#f0f0f0;letter-spacing:-0.300px">УКР</div>
<div class="abs" style="left:1169px;top:684.500px;width:60px;text-align:center;font-size:11.300px;line-height:14px;color:#f0f0f0;letter-spacing:-0.300px">22:20</div>
<div class="abs" style="left:1169px;top:701.500px;width:60px;text-align:center;font-size:11.300px;line-height:14px;color:#f0f0f0;letter-spacing:-0.400px">03.04.2023</div>
<svg class="abs" style="left:1241px;top:693px" width="17" height="15" viewBox="0 0 17 15"><path d="M1 0.800h15v10.500h-5.200L8.500 13.800 6.200 11.300H1z" fill="none" stroke="#f0f0f0" stroke-width="1.200" stroke-linejoin="round"/></svg>
<div class="abs" style="left:1275px;top:682px;width:1px;height:37px;background:#777"></div>

</div>
</body>
</html>
